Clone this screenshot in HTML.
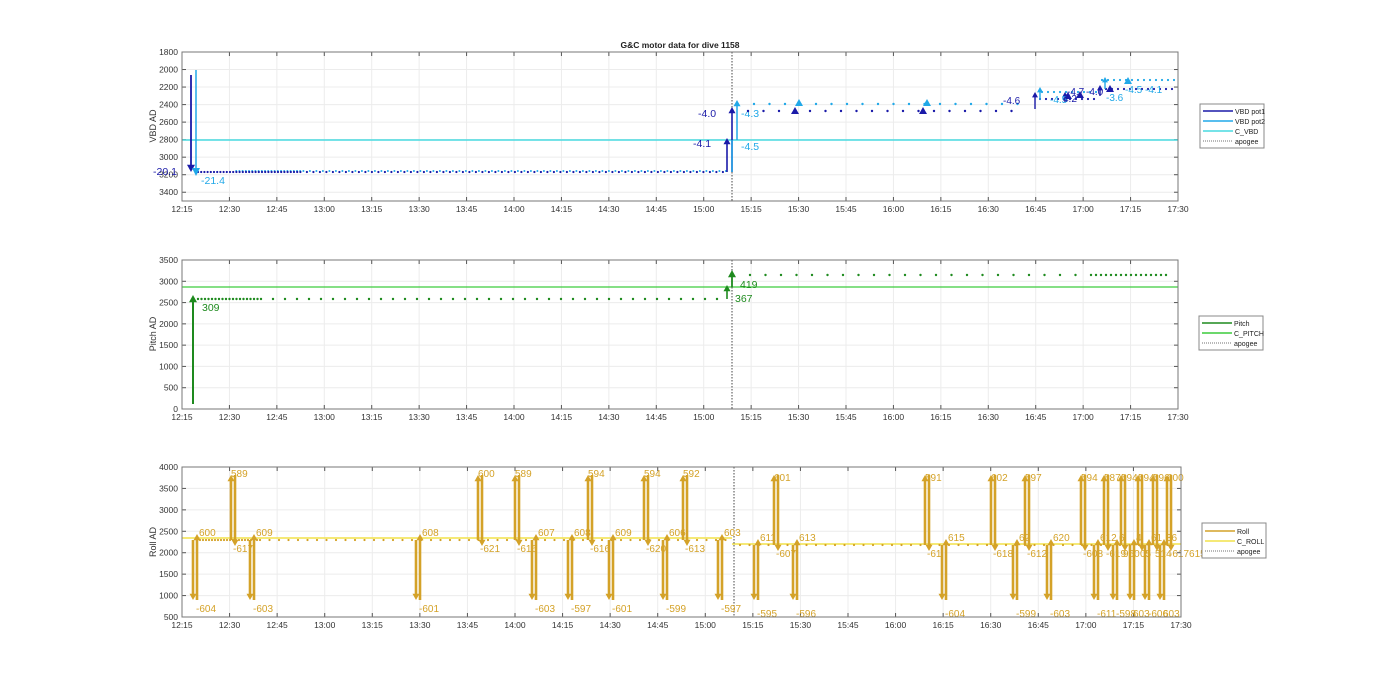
<!DOCTYPE html>
<html><head><meta charset="utf-8">
<style>
html,body{margin:0;padding:0;background:#fff;}
svg{display:block;font-family:"Liberation Sans",sans-serif;}
</style></head>
<body>
<svg id="s" width="1400" height="693" viewBox="0 0 1400 693" xmlns="http://www.w3.org/2000/svg">
<text x="680" y="48" font-size="8.5" font-weight="bold" text-anchor="middle" fill="#222">G&amp;C motor data for dive 1158</text>
</svg>
<script>
var S=document.getElementById('s'),NS='http://www.w3.org/2000/svg',H='';
function L(x1,y1,x2,y2,c,w,d){H+='<line x1="'+x1+'" y1="'+y1+'" x2="'+x2+'" y2="'+y2+'" stroke="'+c+'" stroke-width="'+(w||1)+'"'+(d?' stroke-dasharray="'+d+'"':'')+'/>';}
function T(x,y,t,c,fs,a){H+='<text x="'+x+'" y="'+y+'" font-size="'+(fs||9)+'" fill="'+(c||'#333')+'"'+(a?' text-anchor="'+a+'"':'')+'>'+t+'</text>';}
function D(x,y,c,r){H+='<circle cx="'+x+'" cy="'+y+'" r="'+(r||1.2)+'" fill="'+c+'"/>';}
function ARR(x,y1,y2,c,w,hs){ // arrow from y1 to y2 with head at y2
 hs=hs||4;var dir=y2<y1?1:-1;L(x,y1,x,y2+dir*hs*1.4,c,w);
 H+='<polygon points="'+(x-hs)+','+(y2+dir*hs*1.8)+' '+(x+hs)+','+(y2+dir*hs*1.8)+' '+x+','+y2+'" fill="'+c+'"/>';}
var times=['12:15','12:30','12:45','13:00','13:15','13:30','13:45','14:00','14:15','14:30','14:45','15:00','15:15','15:30','15:45','16:00','16:15','16:30','16:45','17:00','17:15','17:30'];
function axes(x0,x1,y0,y1,vmin,vmax,step,lab){
 var w=x1-x0,h=y1-y0;
 for(var i=0;i<22;i++){var x=x0+i*w/21;L(x,y0,x,y1,'#ececec');L(x,y0,x,y0+4,'#555');L(x,y1,x,y1-4,'#555');T(x,y1+11,times[i],'#333',8.5,'middle');}
 var ty=function(v){return y0+(vmax-v)*h/(vmax-vmin);};
 return ty;
}
function frame(x0,x1,y0,y1){H+='<rect x="'+x0+'" y="'+y0+'" width="'+(x1-x0)+'" height="'+(y1-y0)+'" fill="none" stroke="#777" stroke-width="1"/>';}
function ylab(x,y,t){H+='<text transform="translate('+x+','+y+') rotate(-90)" font-size="9" fill="#333" text-anchor="middle">'+t+'</text>';}
// ---------- TOP ----------
(function(){
 var x0=182,x1=1178,y0=52,y1=201;
 var w=x1-x0,h=y1-y0;
 for(var i=0;i<22;i++){var x=x0+i*w/21;L(x,y0,x,y1,'#ececec');L(x,y0,x,y0+4,'#555');L(x,y1,x,y1-4,'#555');T(x,y1+11,times[i],'#333',8.5,'middle');}
 var ty=function(v){return y0+(v-1800)*149/1700;};
 for(var v=1800;v<=3400;v+=200){var y=ty(v);if(v>1800)L(x0,y,x1,y,'#ececec');L(x0,y,x0+4,y,'#555');L(x1,y,x1-4,y,'#555');T(x0-4,y+3,v,'#333',8.5,'end');}
 ylab(156,126,'VBD AD');
 var dk='#1a1aa8',lb='#20a8e8',cy='#48dae0';
 L(x0,140,x1,140,cy,1.5);
 L(732,y0,732,y1,'#444',1,'1.5,1.5');
 for(var x=198;x<726;x+=(x<300?3.2:6.5)){D(x,172,dk,1.1);if(x>230)D(x+3,171,lb,1);}
 ARR(191,75,172,dk,1.8,4);L(196,70,196,172,lb,1.5);
 H+='<polygon points="192,168 200,168 196,176" fill="'+lb+'"/>';
 T(153,175,'-20.1',dk,10.5);T(201,184,'-21.4',lb,10.5);
 ARR(727,172,138,dk,1.6,3.5);ARR(732,172,107,dk,1.6,3.5);ARR(737,140,100,lb,1.5,3.5);L(732,172,732,140,lb,1.5);
 T(693,147,'-4.1',dk,10.5);T(698,117,'-4.0',dk,10.5);T(741,117,'-4.3',lb,10.5);T(741,150,'-4.5',lb,10.5);
 for(var x=748;x<1025;x+=15.5){D(x,111,dk,1.2);D(x+6,104,lb,1.2);}
 [[795,111,dk],[799,103,lb],[923,111,dk],[927,103,lb],[1068,96,dk],[1080,95,dk],[1110,89,dk],[1128,81,lb]].forEach(function(p){H+='<polygon points="'+(p[0]-4)+','+(p[1]+3)+' '+(p[0]+4)+','+(p[1]+3)+' '+p[0]+','+(p[1]-4)+'" fill="'+p[2]+'"/>';});
 for(var x=1040;x<1175;x+=6){D(x,x<1100?99:89,dk,1.1);D(x+2,x<1100?92:80,lb,1.1);}
 ARR(1035,109,92,dk,1.4,3);ARR(1040,100,87,lb,1.4,3);ARR(1065,102,92,dk,1.4,3);ARR(1100,96,85,dk,1.4,3);ARR(1105,89,77,lb,1.4,3);
 T(1003,104,'-4.6',dk,10);T(1050,103,'-4.5',lb,10);T(1063,102,'4.2',dk,10);T(1067,95,'-4.7',dk,10);T(1086,95,'-4.0',dk,10);T(1106,101,'-3.6',lb,10);T(1125,93,'-4.5 -4.1',lb,10);
 frame(x0,x1,y0,y1);
 // legend
 H+='<rect x="1200" y="104" width="64" height="44" fill="#fff" stroke="#888"/>';
 var lg=[['VBD pot1',dk,0],['VBD pot2',lb,0],['C_VBD',cy,0],['apogee','#444',1]];
 lg.forEach(function(e,i){var y=111+i*10;L(1203,y,1233,y,e[1],e[2]?0.8:1.5,e[2]?'1,1':null);T(1235,y+3,e[0],'#222',7);});
})();
// ---------- MIDDLE ----------
(function(){
 var x0=182,x1=1178,y0=260,y1=409,w=x1-x0;
 for(var i=0;i<22;i++){var x=x0+i*w/21;L(x,y0,x,y1,'#ececec');L(x,y0,x,y0+4,'#555');L(x,y1,x,y1-4,'#555');T(x,y1+11,times[i],'#333',8.5,'middle');}
 var ty=function(v){return y0+(3500-v)*149/3500;};
 for(var v=0;v<=3500;v+=500){var y=ty(v);if(v>0&&v<3500)L(x0,y,x1,y,'#ececec');L(x0,y,x0+4,y,'#555');L(x1,y,x1-4,y,'#555');T(x0-4,y+3,v,'#333',8.5,'end');}
 ylab(156,334,'Pitch AD');
 var g='#1e8a1e',lg2='#3ccc3c';
 L(x0,287,x1,287,lg2,1.2);
 L(732,y0,732,y1,'#444',1,'1.5,1.5');
 for(var x=198;x<726;x+=(x<260?3.5:12)){D(x,299,g,1.2);}
 for(var x=750;x<1170;x+=(x<1090?15.5:5)){D(x,275,g,1.2);}
 ARR(193,404,295,g,2,4);T(202,311,'309',g,10.5);
 ARR(727,299,285,g,1.6,3.5);T(735,302,'367',g,10.5);
 ARR(732,287,270,g,1.8,4);T(740,288,'419',g,10.5);
 frame(x0,x1,y0,y1);
 H+='<rect x="1199" y="316" width="64" height="34" fill="#fff" stroke="#888"/>';
 [['Pitch',g,0],['C_PITCH',lg2,0],['apogee','#444',1]].forEach(function(e,i){var y=323+i*10;L(1202,y,1232,y,e[1],e[2]?0.8:1.5,e[2]?'1,1':null);T(1234,y+3,e[0],'#222',7);});
})();
// ---------- BOTTOM ----------
(function(){
 var x0=182,x1=1181,y0=467,y1=617,w=x1-x0;
 for(var i=0;i<22;i++){var x=x0+i*w/21;L(x,y0,x,y1,'#ececec');L(x,y0,x,y0+4,'#555');L(x,y1,x,y1-4,'#555');T(x,y1+11,times[i],'#333',8.5,'middle');}
 var ty=function(v){return y0+(4000-v)*150/3500;};
 for(var v=500;v<=4000;v+=500){var y=ty(v);if(v>500&&v<4000)L(x0,y,x1,y,'#ececec');L(x0,y,x0+4,y,'#555');L(x1,y,x1-4,y,'#555');T(x0-4,y+3,v,'#333',8.5,'end');}
 ylab(156,542,'Roll AD');
 var o='#d4a228',yl='#f2e24a';
 L(x0,538,732,538,yl,1.5);L(732,544,x1,544,yl,1.5);
 L(734,y0,734,y1,'#444',1,'1.5,1.5');
 for(var x=200;x<726;x+=(x<260?3:9.5))D(x,540,o,1.1);
 for(var x=740;x<1175;x+=9.5)D(x,545,o,1.1);
 // events: [x, type('d' down-up pair / 'u' up-down pair), label1(x,y), label2]
 var ev=[[193,'d','-604','600'],[231,'u','589','-617'],[250,'d','-603','609'],[416,'d','-601','608'],[478,'u','600','-621'],[515,'u','589','-616'],[532,'d','-603','607'],[568,'d','-597','608'],[588,'u','594','-616'],[609,'d','-601','609'],[644,'u','594','-620'],[663,'d','-599','606'],[683,'u','592','-613'],[718,'d','-597','603'],
 [754,'d','-595','611'],[774,'u','601','-607'],[793,'d','-596','613'],[925,'u','591','-61'],[942,'d','-604','615'],[991,'u','602','-618'],[1013,'d','-599','62'],[1025,'u','597','-612'],[1047,'d','-603','620'],[1081,'u','594','-608'],
 [1094,'d','-611','612'],[1104,'u','587','-619'],[1113,'d','-598','6'],[1121,'u','594','960'],[1130,'d','603','4'],[1138,'u','594','05'],[1145,'d','-606','61'],[1153,'u','596','514'],[1160,'d','603','36'],[1167,'u','600','-617615']];
 ev.forEach(function(e){var x=e[0],base=e[0]<730?540:545;
  if(e[1]=='d'){ARR(x,base,600,o,2.6,3.5);ARR(x+4,600,base-6,o,2.6,3.5);T(x+3,612+(x>740?5:0),e[2],o,10);T(x+6,base-4,e[3],o,10);}
  else{ARR(x,base,475,o,2.6,3.5);ARR(x+4,475,base+6,o,2.6,3.5);T(x,477+(x>740?4:0),e[2],o,10);T(x+2,base+12,e[3],o,10);}
 });
 frame(x0,x1,y0,y1);
 H+='<rect x="1202" y="523" width="64" height="35" fill="#fff" stroke="#888"/>';
 [['Roll',o,0],['C_ROLL',yl,0],['apogee','#444',1]].forEach(function(e,i){var y=531+i*10;L(1205,y,1235,y,e[1],e[2]?0.8:1.5,e[2]?'1,1':null);T(1237,y+3,e[0],'#222',7);});
})();
S.insertAdjacentHTML('beforeend',H);
</script>
</body></html>
